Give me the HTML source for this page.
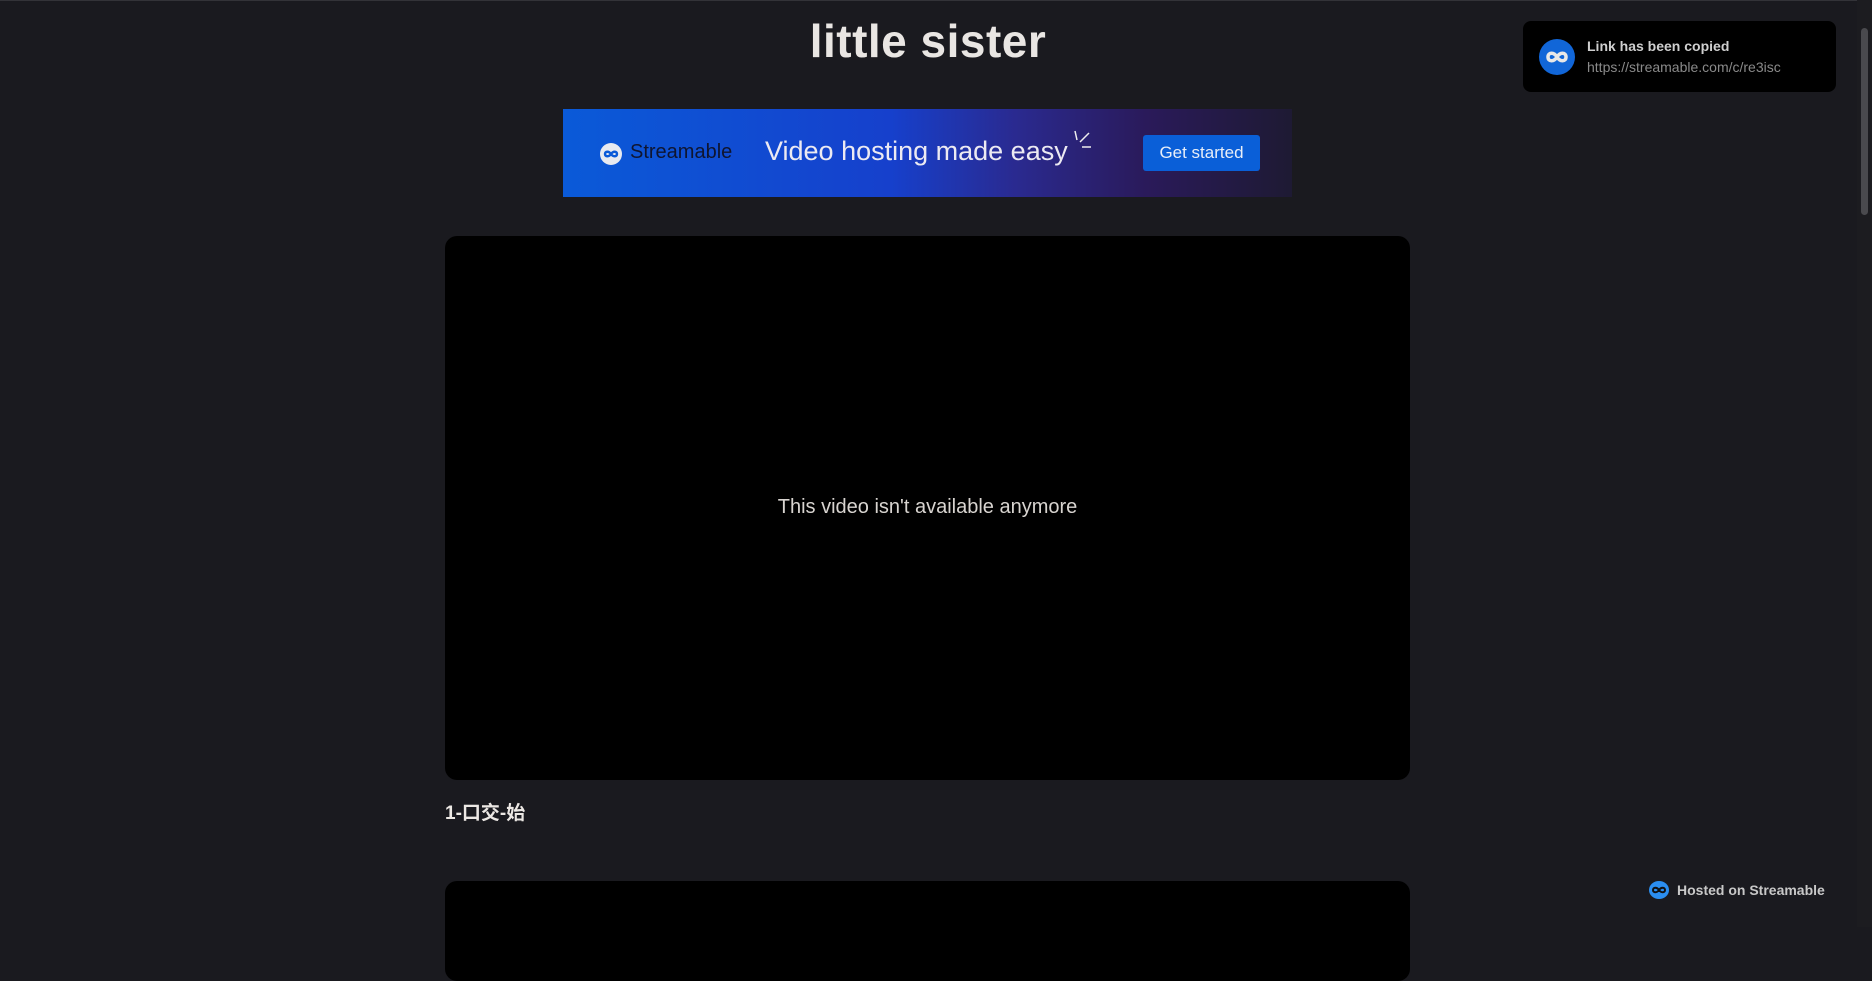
<!DOCTYPE html>
<html><head><meta charset="utf-8"><style>
*{margin:0;padding:0;box-sizing:border-box}
html,body{width:1872px;height:927px;overflow:hidden;background:#1a1a1f;font-family:"Liberation Sans","Noto Sans CJK SC",sans-serif;color:#e8e8e8}
.top{position:absolute;left:0;top:0;width:1872px;height:1px;background:#333338}
h1{position:absolute;left:0;width:1856px;top:14px;text-align:center;font-size:46px;font-weight:bold;color:#e9e6e3;letter-spacing:0.5px}
.banner{position:absolute;left:563px;top:109px;width:729px;height:88px;background:linear-gradient(90deg,#0a5ad8 0%,#1640cc 45%,#2a2a90 62%,#2a1a5a 80%,#1e1a33 100%)}
.logo{position:absolute;left:37px;top:34px;width:22px;height:22px;border-radius:50%;background:#e8eaf0}
.brand{position:absolute;left:67px;top:32px;font-size:20px;color:#0f1530}
.head{position:absolute;left:202px;top:27px;font-size:27px;color:#eceaf2}
.btn{position:absolute;left:580px;top:26px;width:117px;height:36px;background:#0a5fd8;border-radius:3px;color:#e8eef8;font-size:17px;text-align:center;line-height:36px}
.video{position:absolute;left:445px;top:236px;width:965px;height:544px;background:#000;border-radius:12px}
.video span{position:absolute;width:100%;top:260px;text-align:center;font-size:20px;color:#d8d4d0}
.cap{position:absolute;left:445px;top:798px;font-size:19px;font-weight:bold;color:#ece8e4}
.video2{position:absolute;left:445px;top:881px;width:965px;height:100px;background:#000;border-radius:12px}
.toast{position:absolute;left:1523px;top:21px;width:313px;height:71px;background:#000;border-radius:8px}
.toast .ic{position:absolute;left:16px;top:18px;width:36px;height:36px;border-radius:50%;background:#1166d8}
.t1{position:absolute;left:64px;top:17px;font-size:14px;font-weight:bold;color:#cfcfcf}
.t2{position:absolute;left:64px;top:38px;font-size:14px;color:#8a8a8a}
.scroll{position:absolute;left:1857px;top:0;width:15px;height:927px;background:#1c1c20}
.thumb{position:absolute;left:1861px;top:28px;width:7px;height:187px;background:#4a4a4e;border-radius:4px}
.hosted{position:absolute;left:1649px;top:881px;height:18px}
.hosted .ic{position:absolute;left:0;top:0;width:20px;height:18px;border-radius:50%;background:#2b8ef0}
.hosted span{position:absolute;left:28px;top:1px;font-size:14px;font-weight:bold;color:#c8c8c8;white-space:nowrap}
svg{position:absolute;left:0;top:0}
</style></head><body>
<div class="top"></div>
<h1>little sister</h1>
<div class="banner">
 <div class="logo"><svg width="22" height="22" viewBox="0 0 22 22"><path d="M11 11c-2-3-6-3-6 0s4 3 6 0 6-3 6 0-4 3-6 0" fill="none" stroke="#0a5ad8" stroke-width="2.4"/></svg></div>
 <div class="brand">Streamable</div>
 <div class="head">Video hosting made easy</div>
 <svg width="729" height="88" style="pointer-events:none"><path d="M512 22l2 9M526 24l-9 9M519 38h9" stroke="#eee" stroke-width="1.5" fill="none"/></svg>
 <div class="btn">Get started</div>
</div>
<div class="video"><span>This video isn't available anymore</span></div>
<div class="cap">1-口交-始</div>
<div class="video2"></div>
<div class="toast"><div class="ic"><svg width="36" height="36" viewBox="0 0 36 36"><path d="M18 18c-3-5-9-5-9 0s6 5 9 0 9-5 9 0-6 5-9 0" fill="none" stroke="#e8e8e8" stroke-width="3.5"/></svg></div><div class="t1">Link has been copied</div><div class="t2">https://streamable.com/c/re3isc</div></div>
<div class="scroll"></div><div class="thumb"></div>
<div class="hosted"><div class="ic"><svg width="20" height="18" viewBox="0 0 20 18"><path d="M10 9c-2-3-6-3-6 0s4 3 6 0 6-3 6 0-4 3-6 0" fill="none" stroke="#111" stroke-width="2"/></svg></div><span>Hosted on Streamable</span></div>
</body></html>
